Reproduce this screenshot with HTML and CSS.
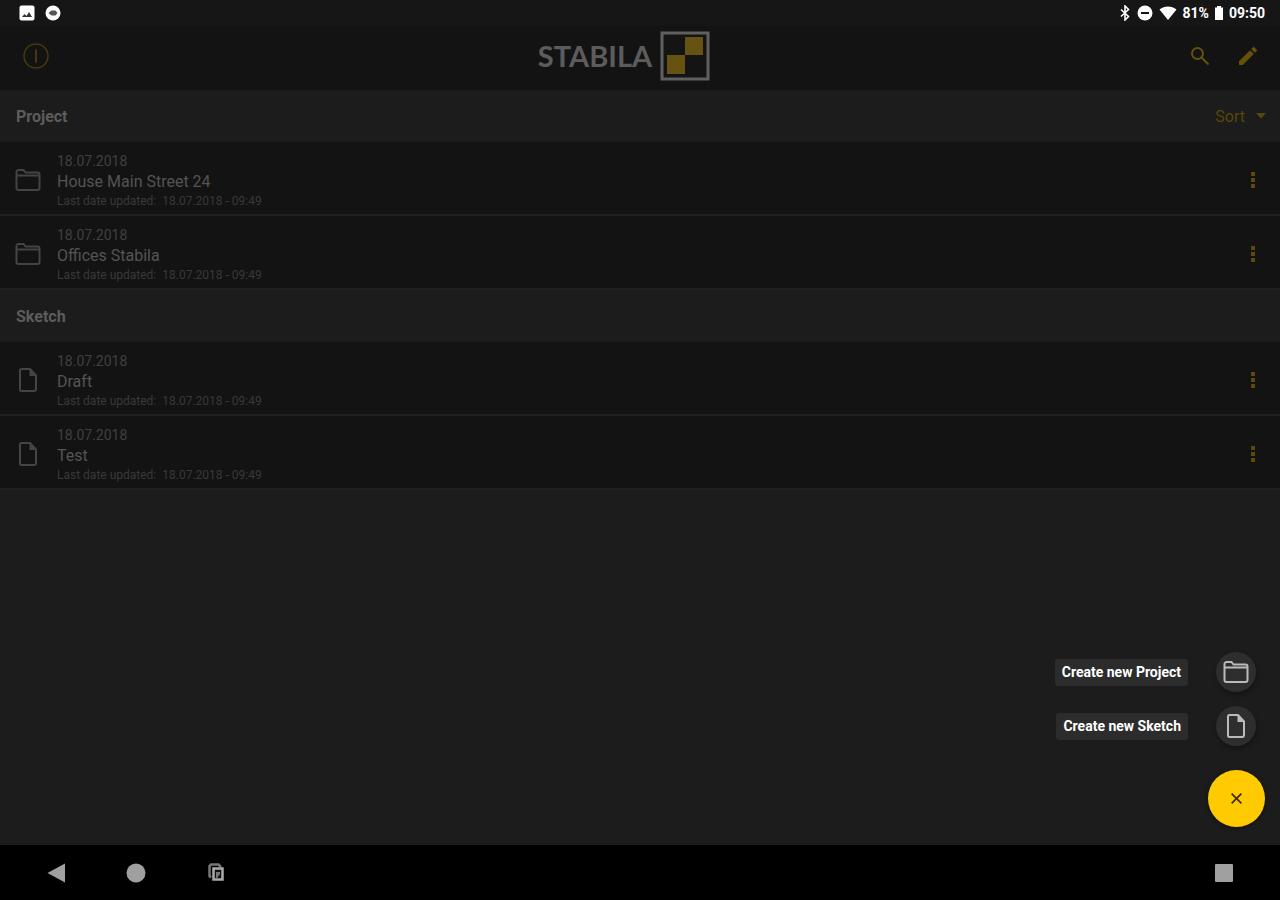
FILE: index.html
```
<!DOCTYPE html>
<html lang="en">
<head>
    <meta charset="UTF-8">
    <meta name="viewport" content="width=device-width, initial-scale=1.0">
    <title>Stabila Measures</title>
    <link rel="stylesheet" href="styles.css">
</head>
<body>
  <!-- shared icons -->
  <svg class="sprite" width="0" height="0">
    <symbol id="folder" viewBox="0 0 26 24">
      <path d="M1.500 20V4a2 2 0 0 1 2-2h5l2 2.500h12a2 2 0 0 1 2 2V20a2 2 0 0 1-2 2h-19a2 2 0 0 1-2-2zM2 7.500h22" fill="none" stroke="currentColor" stroke-width="2"/>
    </symbol>
    <symbol id="file" viewBox="0 0 20 26">
      <path d="M3.500 2h8.500l6 6.500V22a2 2 0 0 1-2 2H3.500a1.500 1.500 0 0 1-1.500-1.500v-19A1.500 1.500 0 0 1 3.500 2z" fill="none" stroke="currentColor" stroke-width="2"/>
      <path d="M11.500 2v7H18z" fill="currentColor"/>
    </symbol>
    <symbol id="dots" viewBox="0 0 6 20">
      <path d="M1 2h4v4H1zM1 8h4v4H1zM1 14h4v4H1z" fill="currentColor"/>
    </symbol>
  </svg>

  <div class="status">
    <div class="status-group">
      <svg width="16" height="16" viewBox="0 0 16 16">
        <rect x="0.500" y="0.500" width="15" height="15" rx="2" fill="#fff"/>
        <path d="M3 12l2.500-3 2 2 2.500-4 3 5z" fill="#333"/>
      </svg>
      <svg width="16" height="16" viewBox="0 0 16 16">
        <circle cx="8" cy="8" r="7.500" fill="#fff"/>
        <path d="M3.500 8l3-2.500h4l2 2.500-2 2.500h-4z" fill="#555"/>
      </svg>
    </div>
    <div class="status-group status-right">
      <svg width="12" height="16" viewBox="0 0 12 16">
        <path d="M2 4.500l7.500 7L6 15V1l3.500 3.500L2 11.500" fill="none" stroke="#fff" stroke-width="1.600"/>
      </svg>
      <svg width="16" height="16" viewBox="0 0 16 16">
        <circle cx="8" cy="8" r="7.500" fill="#fff"/>
        <rect x="4" y="7" width="8" height="2" fill="#161616"/>
      </svg>
      <svg width="18" height="16" viewBox="0 0 18 16">
        <path d="M0.500 4.500C5.500 0.500 12.500 0.500 17.500 4.500L9 15z" fill="#fff"/>
      </svg>
      <span>81%</span>
      <svg width="8" height="16" viewBox="0 0 8 16">
        <path d="M0 2.500h2V1h4v1.500h2V15H0z" fill="#fff"/>
      </svg>
      <span>09:50</span>
    </div>
  </div>

  <header class="header">
    <button class="icon-btn info" type="button" aria-label="Info">
      <svg width="28" height="28" viewBox="0 0 28 28" fill="none" stroke="currentColor">
        <circle cx="14" cy="14" r="12" stroke-width="1.500"/>
        <path d="M14 7.500v13" stroke-width="2"/>
      </svg>
    </button>
    <div class="logo">
      <span class="logo-text">STABILA</span>
      <svg width="50" height="50" viewBox="0 0 50 50">
        <rect x="2" y="2" width="46" height="46" fill="#141414" stroke="#606060" stroke-width="3"/>
        <rect x="25" y="6" width="18" height="18" fill="#665311"/>
        <rect x="7" y="24" width="18" height="19" fill="#665311"/>
      </svg>
    </div>
    <div class="actions">
      <button class="icon-btn" type="button" aria-label="Search">
        <svg width="24" height="24" viewBox="0 0 24 24" fill="none" stroke="currentColor" stroke-width="2">
          <circle cx="9.500" cy="9.500" r="5.500"/>
          <path d="M13.500 13.500l7 7"/>
        </svg>
      </button>
      <button class="icon-btn" type="button" aria-label="Edit">
        <svg width="24" height="24" viewBox="0 0 24 24" fill="currentColor">
          <path d="M3 17.250V21h3.750L17.810 9.940l-3.750-3.750zM20.710 7.040a1 1 0 0 0 0-1.410l-2.340-2.340a1 1 0 0 0-1.410 0l-1.830 1.830 3.750 3.750z"/>
        </svg>
      </button>
    </div>
  </header>

  <main class="content">
    <div class="section">
      <h2>Project</h2>
      <button class="sort" type="button">Sort
        <svg width="10" height="6" viewBox="0 0 10 6"><path d="M0 0h10L5 5.500z" fill="currentColor"/></svg>
      </button>
    </div>
    <ul class="list">
      <li class="row">
        <svg class="row-icon" width="26" height="24"><use href="#folder"/></svg>
        <div class="row-text">
          <div class="date">18.07.2018</div>
          <div class="name">House Main Street 24</div>
          <div class="updated"><span>Last date updated:</span><span>18.07.2018 - 09:49</span></div>
        </div>
        <button class="more" type="button" aria-label="More"><svg width="6" height="20"><use href="#dots"/></svg></button>
      </li>
      <li class="row">
        <svg class="row-icon" width="26" height="24"><use href="#folder"/></svg>
        <div class="row-text">
          <div class="date">18.07.2018</div>
          <div class="name">Offices Stabila</div>
          <div class="updated"><span>Last date updated:</span><span>18.07.2018 - 09:49</span></div>
        </div>
        <button class="more" type="button" aria-label="More"><svg width="6" height="20"><use href="#dots"/></svg></button>
      </li>
    </ul>

    <div class="section">
      <h2>Sketch</h2>
    </div>
    <ul class="list">
      <li class="row">
        <svg class="row-icon" width="26" height="26"><use href="#file"/></svg>
        <div class="row-text">
          <div class="date">18.07.2018</div>
          <div class="name">Draft</div>
          <div class="updated"><span>Last date updated:</span><span>18.07.2018 - 09:49</span></div>
        </div>
        <button class="more" type="button" aria-label="More"><svg width="6" height="20"><use href="#dots"/></svg></button>
      </li>
      <li class="row">
        <svg class="row-icon" width="26" height="26"><use href="#file"/></svg>
        <div class="row-text">
          <div class="date">18.07.2018</div>
          <div class="name">Test</div>
          <div class="updated"><span>Last date updated:</span><span>18.07.2018 - 09:49</span></div>
        </div>
        <button class="more" type="button" aria-label="More"><svg width="6" height="20"><use href="#dots"/></svg></button>
      </li>
    </ul>

    <div class="fab-menu">
      <div class="fab-item">
        <label class="fab-label" for="new-project">Create new Project</label>
        <button class="fab-small" id="new-project" type="button"><svg width="26" height="24"><use href="#folder"/></svg></button>
      </div>
      <div class="fab-item">
        <label class="fab-label" for="new-sketch">Create new Sketch</label>
        <button class="fab-small" id="new-sketch" type="button"><svg width="20" height="26"><use href="#file"/></svg></button>
      </div>
      <button class="fab" type="button" aria-label="Close">
        <svg width="13" height="13" viewBox="0 0 12 12"><path d="M1.500 1.500l9 9M10.500 1.500l-9 9" stroke="#3a2f00" stroke-width="1.600"/></svg>
      </button>
    </div>
  </main>

  <nav class="navbar">
    <div class="nav-left">
      <button class="nav-btn" type="button" aria-label="Back">
        <svg width="20" height="20" viewBox="0 0 20 20"><path d="M1.500 10L19 0.500v19z" fill="currentColor"/></svg>
      </button>
      <button class="nav-btn" type="button" aria-label="Home">
        <svg width="20" height="20" viewBox="0 0 20 20"><circle cx="10" cy="10" r="9.500" fill="currentColor"/></svg>
      </button>
      <button class="nav-btn" type="button" aria-label="Screenshot">
        <svg width="20" height="20" viewBox="0 0 20 20">
          <path d="M5 14.500L3.500 13V3L5 1.500h7.500L15 4" fill="none" stroke="#777" stroke-width="2.500"/>
          <path d="M7.500 5.500h9v11h-9z" fill="#111" stroke="#aaa" stroke-width="2.500"/>
          <path d="M10 9h4v2l-3 4h-1z" fill="#777"/>
        </svg>
      </button>
    </div>
    <button class="nav-btn" type="button" aria-label="Recent apps">
      <svg width="20" height="20" viewBox="0 0 20 20"><rect x="1" y="1" width="18" height="18" rx="1" fill="currentColor"/></svg>
    </button>
  </nav>
</body>
</html>
```
FILE: styles.css
```
*{
   box-sizing: border-box;
}

body{
   margin: 0;
   min-height: 100vh;
   display: flex;
   flex-direction: column;
   font-family: Roboto, sans-serif;
   background-color: #1c1c1c;
   color: #5c5c5c;
}

button{
   display: flex;
   align-items: center;
   justify-content: center;
   padding: 0;
   border: none;
   background: none;
   color: inherit;
   font-family: inherit;
   cursor: pointer;
}

.sprite{
   position: absolute;
}

/* status bar */
.status{
   display: flex;
   justify-content: space-between;
   align-items: center;
   height: 26px;
   padding: 0 15px 0 19px;
   background-color: #161616;
   color: #fff;
   font-size: 14px;
   font-weight: 700;
}

.status-group{
   display: flex;
   align-items: center;
   gap: 10px;
}

.status-right{
   gap: 6px;
}

/* header */
.header{
   display: flex;
   justify-content: space-between;
   align-items: center;
   height: 64px;
   padding: 0 20px 4px 12px;
   background-color: #131313;
}

.icon-btn{
   width: 24px;
   height: 48px;
   color: #65510a;
}

.info{
   width: 48px;
   color: #483909;
}

.logo{
   display: flex;
   align-items: center;
   gap: 8px;
}

.logo-text{
   font-family: Lato, sans-serif;
   font-size: 29px;
   font-weight: 700;
   line-height: 50px;
}

.actions{
   display: flex;
   gap: 24px;
}

/* lists */
.content{
   position: relative;
   flex: 1;
}

.section{
   display: flex;
   justify-content: space-between;
   align-items: center;
   height: 52px;
   padding: 0 14px 0 16px;
}

.section h2{
   margin: 0;
   font-size: 16px;
   font-weight: 700;
}

.sort{
   gap: 11px;
   font-size: 16px;
   color: #58460b;
}

.list{
   margin: 0;
   padding: 0;
   list-style: none;
   background-color: #131313;
}

.row{
   display: flex;
   align-items: center;
   height: 74px;
   padding: 3px 24px 0 15px;
   border-bottom: 2px solid #202020;
}

.row-icon{
   color: #444;
}

.row-text{
   flex: 1;
   padding-left: 16px;
}

.date{
   font-size: 14px;
   line-height: 20px;
   color: #404040;
}

.name{
   font-size: 16px;
   line-height: 22px;
   color: #545454;
}

.updated{
   display: flex;
   gap: 6px;
   font-size: 12px;
   line-height: 16px;
   color: #393939;
}

.more{
   height: 48px;
   color: #5c4a0a;
}

/* floating menu */
.fab-menu{
   position: absolute;
   right: 15px;
   bottom: 18px;
   display: flex;
   flex-direction: column;
   align-items: flex-end;
}

.fab-item{
   display: flex;
   align-items: center;
   gap: 28px;
   margin: 0 9px 14px 0;
}

.fab-label{
   padding: 0 7px;
   border-radius: 3px;
   background-color: #2c2c2c;
   color: #fff;
   font-size: 14px;
   font-weight: 700;
   line-height: 27px;
}

.fab-small{
   width: 40px;
   height: 40px;
   border-radius: 50%;
   background-color: #2e2e2e;
   color: #bbb;
   box-shadow: 1px 3px 5px rgba(0,0,0,0.3);
}

.fab{
   width: 57px;
   height: 57px;
   margin-top: 10px;
   border-radius: 50%;
   background-color: #ffcb00;
   box-shadow: 0 1px 4px rgba(0,0,0,0.5);
}

/* android navigation */
.navbar{
   display: flex;
   justify-content: space-between;
   align-items: center;
   height: 55px;
   padding: 0 46px;
   background-color: #000;
   color: #a0a0a0;
}

.nav-left{
   display: flex;
   gap: 60px;
}
```
